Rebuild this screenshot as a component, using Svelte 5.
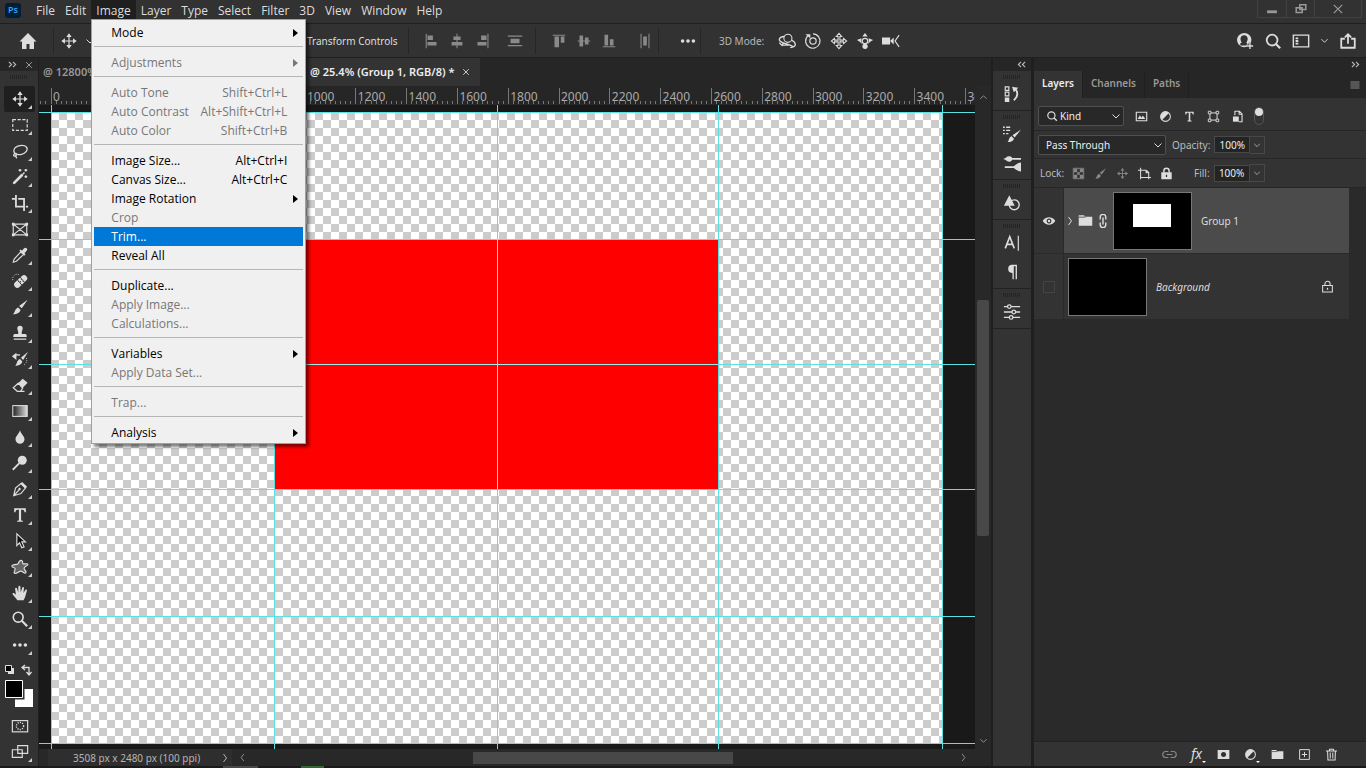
<script>
    const menus = ['File', 'Edit', 'Image', 'Layer', 'Type', 'Select', 'Filter', '3D', 'View', 'Window', 'Help']

    const imageMenu = [
        [{ label: 'Mode', sub: true }],
        [{ label: 'Adjustments', sub: true, off: true }],
        [
            { label: 'Auto Tone', keys: 'Shift+Ctrl+L', off: true },
            { label: 'Auto Contrast', keys: 'Alt+Shift+Ctrl+L', off: true },
            { label: 'Auto Color', keys: 'Shift+Ctrl+B', off: true }
        ],
        [
            { label: 'Image Size...', keys: 'Alt+Ctrl+I' },
            { label: 'Canvas Size...', keys: 'Alt+Ctrl+C' },
            { label: 'Image Rotation', sub: true },
            { label: 'Crop', off: true },
            { label: 'Trim...' },
            { label: 'Reveal All' }
        ],
        [
            { label: 'Duplicate...' },
            { label: 'Apply Image...', off: true },
            { label: 'Calculations...', off: true }
        ],
        [
            { label: 'Variables', sub: true },
            { label: 'Apply Data Set...', off: true }
        ],
        [{ label: 'Trap...', off: true }],
        [{ label: 'Analysis', sub: true }]
    ]

    const tools = ['move', 'marquee', 'lasso', 'wand', 'crop', 'frame', 'eyedropper', 'heal', 'brush', 'stamp', 'history-brush', 'eraser', 'gradient', 'blur', 'dodge', 'pen', 'type', 'arrow', 'shape', 'hand', 'zoom', 'more']

    const optionGroups = [
        ['align-left', 'align-center', 'align-right'],
        ['align-top', 'align-middle', 'align-bottom']
    ]
    const modes3d = ['orbit', 'roll', 'pan', 'slide', 'camera']
    const dock = [['history'], ['brushes', 'brush-settings'], ['shapes'], ['character', 'paragraph'], ['properties']]
    const filters = ['image', 'adjust', 'type', 'transform', 'smart']
    const locks = [['checker', true], ['brush', true], ['move', true], ['artboard', false], ['lock', false]]
    const layerActions = ['link-off', 'fx', 'mask', 'adjust', 'folder', 'new', 'trash']

    // document scale: 25.4% with rulers in pixels
    const zoom = 0.254
    const origin = 12
    const majors = Array.from({ length: 19 }, (_, i) => i * 200)
    const minors = Array.from({ length: 190 }, (_, i) => (i - 2) * 20)
    const guidesX = [0, 223, 446, 667, 891]
    const guidesY = [0, 127, 252, 377, 504, 631]

    let selected = $state('Trim...')
    let tool = $state('move')
    let opacity = $state('100%')
    let fill = $state('100%')

    const s = 'fill="none" stroke="currentColor"'
    const icons = {
        home: `<path fill="currentColor" d="M10 2 1.500 10.500H4V18h4.500v-5h3v5H16v-7.500h2.500z"/>`,
        move: `<path ${s} stroke-width="1.300" d="M10 3v14M3 10h14"/><path fill="currentColor" d="M10 1.500 13 5.500H7zM10 18.500 7 14.500h6zM1.500 10 5.500 7v6zM18.500 10 14.500 13V7z"/>`,
        marquee: `<rect ${s} stroke-width="1.300" stroke-dasharray="3.500 1.800" x="2" y="4" width="16" height="12"/>`,
        lasso: `<path ${s} stroke-width="1.400" d="M6 13.500C1 11 3 5 10 4c7-1 9.500 3 7 6.500-2.500 3.500-8 4-11 3-2.500-1-4 1-2.500 2s3-.5 2.500-2c-1 2-1 3 .5 4.500"/>`,
        wand: `<path stroke="currentColor" stroke-width="3" stroke-linecap="round" d="M3.500 16.500 12 8"/><path ${s} stroke-width="1.500" d="m13 7 2-2M10 1v3M8.500 2.500h3M16.500 1v3M15 2.500h3M16.500 8v3M15 9.500h3"/>`,
        crop: `<path ${s} stroke-width="2" d="M5.500 1v13H15M1 5.500h4M8 5.500h6.500V19M16.500 14H19"/>`,
        frame: `<path ${s} stroke-width="1.300" d="M2.500 4.500h15v12h-15zM2.500 4.500l15 12M17.500 4.500l-15 12"/><path fill="currentColor" d="M1 3h3v3H1zM16 3h3v3h-3zM1 15h3v3H1zM16 15h3v3h-3z"/>`,
        eyedropper: `<path ${s} stroke-width="1.300" d="m11 6.500 3 3-8 7.500-3.500 1 1-3.500z"/><path stroke="currentColor" stroke-width="4" stroke-linecap="round" d="m14 6 2-2"/><path stroke="currentColor" stroke-width="2" d="m10 4.500 5.500 5.500"/>`,
        heal: `<path stroke="currentColor" stroke-width="7" stroke-linecap="round" d="m7 14 7.500-7"/><path fill="#333" d="M8 10h1v1H8zM10 12h1v1h-1zM11 8h1v1h-1zM13 10h1v1h-1zM10 10h1v1h-1z"/><path fill="none" stroke="#333" d="m7 8.500 5 6M10 5.500l5 6"/><path ${s} stroke-dasharray="1 1.500" d="M2 9C1 5 5 1 9 3"/>`,
        brush: `<path fill="currentColor" d="m18.500 2-6.500 9.500-3-2.500zM8 10.500l2.500 2.500c0 3-3.500 5-8.500 5 2.500-1.500 2-6 6-7.500z"/>`,
        stamp: `<path fill="currentColor" d="M7 5a3 3 0 1 1 6 0c0 2-1.500 3-1 6h4c1 0 1.500 1 1.500 3.500h-15C2.500 12 3 11 4 11h4c.5-3-1-4-1-6zM3 16h14v1.500H3z"/>`,
        'history-brush': `<path fill="currentColor" d="m19 2-5.500 9L11 8.500zM10 10l2.500 2.500c0 3-3.500 5-8 5 2.500-1.500 1.500-6 5.500-7.500zM1 7l5-4v8z"/><path ${s} stroke-width="1.500" d="M5 5.500h5"/><path ${s} stroke-dasharray="1 1.500" d="M17 9c1.500 3 0 6-3 8"/>`,
        eraser: `<path fill="currentColor" d="m8 8 5-5 5.500 4.500-6 6z"/><path ${s} stroke-width="1.300" d="m8 8-5.500 5L7 17h3.500l2.500-3.500zM7 17h8"/>`,
        gradient: `<defs><linearGradient id="tool-gradient"><stop offset="0" stop-color="#222"/><stop offset="1" stop-color="#ddd"/></linearGradient></defs><rect x="2" y="4" width="16" height="12" fill="url(#tool-gradient)" stroke="currentColor" stroke-width="1.200"/>`,
        blur: `<path fill="currentColor" d="M10 2.500c1 4 5 6.500 5 10a5 5 0 0 1-10 0c0-3.500 4-6 5-10z"/>`,
        dodge: `<circle cx="12.500" cy="7" r="5" fill="currentColor"/><path stroke="currentColor" stroke-width="2" d="m9 10.500-7 7"/>`,
        pen: `<path ${s} stroke-width="1.300" d="M3 17.500 5 9l6-5 5 5-5 6zM3 17.500l6.500-7"/><circle cx="9.500" cy="10" r="1.300" fill="currentColor"/><path stroke="currentColor" stroke-width="2.500" d="m11.500 3 5.500 5.500"/>`,
        type: `<path fill="currentColor" d="M3.500 2.500h13v4.500H15c-.3-2-.8-2.800-2.300-2.800h-1.500V15c0 1 .5 1.300 2 1.400v1.100H6.800v-1.100c1.500-.1 2-.4 2-1.400V4.200H7.300C5.800 4.200 5.300 5 5 7H3.500z"/>`,
        arrow: `<path fill="#111" stroke="currentColor" stroke-width="1.300" d="M6.500 2v13l3-3 2.500 5.500 2.500-1-2.500-5.500h4z"/>`,
        shape: `<path fill="#666" stroke="currentColor" stroke-width="1.300" d="M7.500 7c1-2.500 2.500-5 4.500-4.300s0 3.300 1.500 3.800 4.800-1 5.300.5-4.300 2.500-4.300 4.500 3.500 3.500 2 5-3.500-2-5.500-2-5 3.500-7 2.500 1.500-4 .5-5.500-3.500-.5-3.500-2.500S6 7.300 7.500 7z"/>`,
        hand: `<path fill="currentColor" d="M7 18c-1-2-4-5-5.500-7 .5-1.500 2-1 4 1L4.500 5c.5-1.500 2-1 2.300.2L8 9.500 8.200 3c.3-1.500 2-1.500 2.200 0l.4 6.500L12.500 4c.5-1.300 2-.8 1.900.5L13.800 10l2.300-3.500c.8-1 2-.3 1.500 1C16.500 11 16 15 14 18z"/>`,
        zoom: `<circle ${s} stroke-width="1.800" cx="8" cy="8" r="5.500"/><path stroke="currentColor" stroke-width="2.400" d="m12 12 6 6"/>`,
        more: `<circle cx="4" cy="10" r="2" fill="currentColor"/><circle cx="10" cy="10" r="2" fill="currentColor"/><circle cx="16" cy="10" r="2" fill="currentColor"/>`,
        quickmask: `<rect ${s} stroke-width="1.300" x="1.500" y="4" width="17" height="12.500"/><circle ${s} stroke-width="1.500" stroke-dasharray="1.300 1.300" cx="10" cy="10" r="4"/>`,
        screen: `<path fill="#333" stroke="currentColor" stroke-width="1.300" d="M1.500 7.500h11V16h-11z"/><path ${s} stroke-width="1.300" d="M7.500 3h11v8.500h-11z"/>`,
        'align-left': `<path fill="currentColor" d="M3 2h1.200v16H3zM5 4h6v5H5zM5 11h10v4H5z"/>`,
        'align-center': `<path fill="currentColor" d="M9.400 2h1.200v16H9.400zM6 5h8v4H6zM4 11h12v4H4z"/>`,
        'align-right': `<path fill="currentColor" d="M16 2h1.200v16H16zM9 4h6v5H9zM5 11h10v4H5z"/>`,
        'dist-v': `<path fill="currentColor" d="M2 4h16v1.200H2zM5 7.500h10v5H5zM2 14.500h16v1.200H2z"/>`,
        'align-top': `<path fill="currentColor" d="M3 3h14v1.200H3zM5 5h5v12H5zM12 5h4v7h-4z"/>`,
        'align-middle': `<path fill="currentColor" d="M3 9.400h14v1.200H3zM5 4h4v12H5zM11 6h4v8h-4z"/>`,
        'align-bottom': `<path fill="currentColor" d="M3 15.800h14V17H3zM5 3h4v12H5zM11 8h4v7h-4z"/>`,
        'dist-h': `<path fill="currentColor" d="M5 2h1.200v16H5zM8 5h4v10H8zM13.800 2H15v16h-1.200z"/>`,
        orbit: `<circle ${s} stroke-width="1.200" cx="11" cy="7" r="4.500"/><path ${s} stroke-width="1.400" d="M7 5C1 5.500 0 9 3.500 11s10 3 13.500 5.500c3-.5 3.500-5-2-7.500M1.500 12l3 3 1.500-3M17 16.500l-3.500 1M5 14.500h7"/>`,
        roll: `<circle ${s} stroke-width="1.300" cx="10" cy="10" r="3.500"/><path ${s} stroke-width="1.300" d="M4.500 4a8 8 0 1 0 5.500-2"/><path fill="currentColor" d="M1.500 2.500h5.500v4.500z"/>`,
        pan: `<path ${s} stroke-width="1.200" d="M10 1.500 13 5h-2v4h4V7l3.500 3-3.500 3v-2h-4v4h2l-3 3.500L7 15h2v-4H5v2l-3.500-3L5 7v2h4V5H7z"/>`,
        slide: `<circle ${s} stroke-width="1.300" cx="10" cy="10" r="3"/><path fill="currentColor" d="m10 1 3 4H7zM1 9l5-2v5zM19 9l-5-2v5zM10 19a3 3 0 1 1 .1 0z"/><path ${s} d="m4 10 3 3M16 10l-3 3"/>`,
        camera: `<path fill="currentColor" d="M0 6h9v8H0zM9 10l4-4v8z"/><path ${s} stroke-width="1.300" d="M19 3.500 14.500 10l4.500 6.500"/>`,
        user: `<path fill="currentColor" fill-rule="evenodd" d="M9 1a8 8 0 1 0 3 15.500V14h2v-2h2.500A8 8 0 0 0 9 1zm0 2.500c2.500 0 4 1.800 4 4 0 1.800-.7 3-1.500 4l1 1.500-1.500 2H5l-.5-2 2-1.500C5.500 10.500 5 9.300 5 7.500c0-2.200 1.500-4 4-4z"/><path ${s} stroke-width="1.500" d="M15.500 12v7M12 15.500h7"/>`,
        search: `<circle ${s} stroke-width="2" cx="9" cy="9" r="6"/><path stroke="currentColor" stroke-width="2.400" d="m13 13 5 5"/>`,
        workspace: `<path ${s} stroke-width="1.600" d="M1.500 3.500h17v13h-17z"/><path fill="currentColor" d="M4 6h3v2H4zM4 9h3v2H4zM4 12h3v2H4z"/>`,
        share: `<path ${s} stroke-width="2" d="M6.500 7.500h-4v10h15v-10h-4M10 13V3M6.500 6 10 2.500 13.500 6"/>`,
        history: `<path ${s} stroke-width="1.300" d="M2.500 2h4v4h-4zM2.500 8h4v4h-4z"/><path fill="currentColor" d="M2 14h5v5H2zM10 2l7 1-5 5z"/><path ${s} stroke-width="2" d="M13 4c4 3 4 9-1 13"/>`,
        brushes: `<path fill="currentColor" d="M20 5 13 14l-2.500-2.500zM9.500 12.500 12 15c0 3-3.500 4-7 4 2-1.500 1-5 4.500-6.500z"/><path ${s} stroke-width="1.400" d="M0 2.500h2M3.500 2.500H8M0 6h2M3.500 6H8M0 9.500h2M3.500 9.500H6"/>`,
        'brush-settings': `<path ${s} stroke-width="2" d="M8 5.500h12M2 14.500h11"/><path fill="currentColor" d="M0 5.500C3 5 4 2 8 2.500l2 1.500v3L8 8.500C5 9 3 6 0 5.500zM20 9.500v10c-3 0-4.500-1.500-8-4v-2c3.500-2.500 5-4 8-4z"/>`,
        shapes: `<path fill="currentColor" d="M7 1.500 13 13H1z"/><circle ${s} stroke-width="1.500" cx="12.500" cy="12" r="5.500"/>`,
        character: `<path ${s} stroke-width="1.800" d="m2.500 16 5-13 5 13M4.500 11.500h6"/><path ${s} stroke-width="1.300" d="M17 2v16.500"/>`,
        paragraph: `<path fill="currentColor" d="M15.500 2v16H14V3.500h-2V18h-1.500v-7A4.500 4.500 0 0 1 10 2z"/>`,
        properties: `<path ${s} stroke-width="1.400" d="M1 4h4M9 4h10M1 10h9M14 10h5M1 16h6M11 16h8"/><circle ${s} stroke-width="1.400" cx="7" cy="4" r="2"/><circle ${s} stroke-width="1.400" cx="12" cy="10" r="2"/><circle ${s} stroke-width="1.400" cx="9" cy="16" r="2"/>`,
        image: `<path ${s} stroke-width="1.800" d="M2 3.500h16v13H2z"/><path fill="currentColor" d="m4 14 3.500-6 2.500 4 2-3.500L16 14z"/>`,
        adjust: `<circle ${s} stroke-width="1.600" cx="10" cy="10" r="7.500"/><path fill="currentColor" d="M15.300 4.700A7.500 7.500 0 0 0 4.700 15.300z"/>`,
        transform: `<path ${s} stroke-width="1.500" d="M4.500 4.500h11v11h-11z"/><path fill="#333" stroke="currentColor" stroke-width="1.400" d="M2 2h4v4H2zM14 2h4v4h-4zM2 14h4v4H2zM14 14h4v4h-4z"/>`,
        smart: `<path ${s} stroke-width="1.700" d="M6 8V2h7l4 4v12h-5M12.500 2v4.500H17"/><path fill="currentColor" d="M3 10h9v8H3z"/>`,
        checker: `<path ${s} stroke-width="1.500" d="M2 2h16v16H2z"/><path fill="currentColor" d="M3 3h5v5H3zM12 3h5v5h-5zM8 8h4v4H8zM3 12h5v5H3zM12 12h5v5h-5z"/>`,
        artboard: `<path ${s} stroke-width="1.600" d="M4 1v18M0 5h13M4 16h16M16.500 19V8.500L13 5M12.500 5v4h4"/>`,
        lock: `<path fill="currentColor" fill-rule="evenodd" d="M2 8h16v11H2zm7 4v3.500h2V12z"/><path ${s} stroke-width="2.200" d="M6 9V6a4 4 0 0 1 8 0v3"/>`,
        'lock-line': `<path ${s} stroke-width="1.600" d="M2.500 8.500h15v10h-15zM6 8.500V6a4 4 0 0 1 8 0v2.500"/><path fill="currentColor" d="M9 12h2v3H9z"/>`,
        eye: `<path fill="currentColor" fill-rule="evenodd" d="M1 10c4-7 14-7 18 0-4 7-14 7-18 0zm9-3.500a3.500 3.500 0 1 0 .1 0z"/><circle cx="10" cy="10" r="1.800" fill="currentColor"/>`,
        folder: `<path fill="currentColor" d="M1 3h7l1.500 2H19v12H1z"/><path stroke="#333" d="M1 5.500h9"/>`,
        chain: `<path ${s} stroke-width="2" d="M6 8V4.500a4 4 0 0 1 8 0V8M6 12v3.500a4 4 0 0 0 8 0V12M10 5v10"/>`,
        'link-off': `<path ${s} stroke-width="1.500" d="M8.500 6H5a4 4 0 0 0 0 8h3.500M11.500 6H15a4 4 0 0 1 0 8h-3.500M6 10h8"/>`,
        mask: `<path fill="currentColor" fill-rule="evenodd" d="M1 3h18v14H1zm9 3a4 4 0 1 0 .1 0z"/>`,
        new: `<path ${s} stroke-width="1.500" d="M2.500 2.500h15v15h-15zM10 6v8M6 10h8"/>`,
        trash: `<path ${s} stroke-width="1.600" d="M1.500 4.500h17M7 4V2h6v2M4 5l.5 13.500h11L16 5M8 7v9M12 7v9"/>`,
        down: `<path ${s} stroke-width="2" d="m3 7 7 7 7-7"/>`,
        up: `<path ${s} stroke-width="2" d="m3 13 7-7 7 7"/>`,
        right: `<path ${s} stroke-width="2" d="m7 2 6 8-6 8"/>`,
        left: `<path ${s} stroke-width="2" d="m13 2-6 8 6 8"/>`,
        expand: `<path ${s} stroke-width="2.500" d="m2 4 6 6-6 6M11 4l6 6-6 6"/>`,
        collapse: `<path ${s} stroke-width="2.500" d="m9 4-6 6 6 6M18 4l-6 6 6 6"/>`,
        close: `<path ${s} stroke-width="2" d="m3 3 14 14M17 3 3 17"/>`,
        menu: `<path ${s} stroke-width="1.500" d="M1 4h18M1 8h18M1 12h18M1 16h18"/>`,
        minimize: `<path ${s} stroke-width="4" d="M3 14h14"/>`,
        restore: `<path ${s} stroke-width="2.500" d="M8 3h10v8H8zM2 8h10v8H2z"/>`
    }
</script>

{#snippet icon(name, size = 20)}
    <svg class="icon" width={size} height={size} viewBox="0 0 20 20" aria-hidden="true">{@html icons[name]}</svg>
{/snippet}

<div class="app">
    <header class="menubar">
        <div class="logo">Ps</div>
        <nav>
            {#each menus as name}
                <div class="menu">
                    <button class:open={name === 'Image'}>{name}</button>
                    {#if name === 'Image'}
                        <div class="dropdown">
                            {#each imageMenu as group, g}
                                {#if g > 0}<hr />{/if}
                                {#each group as item}
                                    <button class="item" class:selected={selected === item.label} disabled={item.off} onclick={() => (selected = item.label)}>
                                        <span>{item.label}</span>
                                        {#if item.keys}<span class="keys">{item.keys}</span>{/if}
                                        {#if item.sub}<i class="caret"></i>{/if}
                                    </button>
                                {/each}
                            {/each}
                        </div>
                    {/if}
                </div>
            {/each}
        </nav>
        <div class="window-buttons">
            <button aria-label="Minimize">{@render icon('minimize', 14)}</button>
            <button aria-label="Restore">{@render icon('restore', 12)}</button>
            <button class="wide" aria-label="Close">{@render icon('close', 12)}</button>
        </div>
    </header>

    <div class="options">
        <button class="home" aria-label="Home">{@render icon('home')}</button>
        <button class="current" aria-label="Move tool">{@render icon('move', 18)}{@render icon('down', 10)}</button>
        <span class="transform">Transform Controls</span>
        <div class="group">
            {#each optionGroups[0] as name}<button class="dim" aria-label={name}>{@render icon(name, 18)}</button>{/each}
            <button class="dim wide" aria-label="Distribute vertically">{@render icon('dist-v', 18)}</button>
        </div>
        <div class="group">
            {#each optionGroups[1] as name}<button class="dim" aria-label={name}>{@render icon(name, 18)}</button>{/each}
            <button class="dim far" aria-label="Distribute horizontally">{@render icon('dist-h', 18)}</button>
        </div>
        <div class="group dots"><button aria-label="Align options">{@render icon('more', 18)}</button></div>
        <div class="group modes">
            <span>3D Mode:</span>
            {#each modes3d as name}<button aria-label={name}>{@render icon(name, 18)}</button>{/each}
        </div>
        <div class="right">
            <button aria-label="Account">{@render icon('user', 18)}</button>
            <button aria-label="Search">{@render icon('search', 18)}</button>
            <button aria-label="Workspace">{@render icon('workspace', 18)}</button>
            <button class="narrow" aria-label="Choose workspace">{@render icon('down', 9)}</button>
            <button aria-label="Share">{@render icon('share', 18)}</button>
        </div>
    </div>

    <div class="workspace">
        <aside class="tools">
            <div class="strip-head">{@render icon('expand', 9)}{@render icon('close', 8)}</div>
            <div class="grip"></div>
            {#each tools as name}
                <button class="tool" class:active={tool === name} class:single={name === 'frame'} aria-label={name} onclick={() => (tool = name)}>
                    {@render icon(name, 18)}
                </button>
            {/each}
            <svg class="swatches" width="30" height="46" viewBox="0 0 30 46">
                <path fill="#ddd" d="M4 6h6v6H4z" />
                <path fill="#000" stroke="#ddd" d="M1.500 3.500h6v6h-6z" />
                <path fill="none" stroke="#ddd" stroke-width="1.300" d="M19 5.500h6V12M21 3l-3 2.500L21 8M22.500 10l2.500 3 2.500-3" />
                <path fill="#fff" d="M11 27h18v18H11z" />
                <path fill="#000" stroke="#333" stroke-width="3" d="M1 18h18v18H1z" />
                <path fill="#000" stroke="#fff" d="M1.500 18.500h17v17h-17z" />
            </svg>
            <button class="tool single" aria-label="Quick mask">{@render icon('quickmask', 18)}</button>
            <button class="tool" aria-label="Screen mode">{@render icon('screen', 18)}</button>
        </aside>

        <main class="document">
            <div class="tabs">
                <button class="tab hidden-tab">@ 12800%</button>
                <button class="tab active">@ 25.4% (Group 1, RGB/8) * {@render icon('close', 8)}</button>
            </div>
            <div class="view">
                <div class="sheet">
                    <svg class="ruler" aria-hidden="true">
                        {#each minors as m}
                            <line x1={origin + m * zoom} x2={origin + m * zoom} y1="15" y2="18" />
                        {/each}
                        {#each majors as m}
                            <line x1={origin + m * zoom} x2={origin + m * zoom} y1="2" y2="18" />
                            <text x={origin + 2 + m * zoom} y="15">{m}</text>
                        {/each}
                    </svg>
                    <svg class="canvas" aria-label="Canvas">
                        <defs>
                            <pattern id="transparent" width="16" height="16" patternUnits="userSpaceOnUse">
                                <rect width="16" height="16" fill="#fff" />
                                <path fill="#ccc" d="M8 0h8v8H8zM0 8h8v8H0z" />
                            </pattern>
                        </defs>
                        <g transform="translate(12 7)">
                            <rect width="892" height="631" fill="url(#transparent)" />
                            <rect x="223" y="127" width="444" height="250" fill="#f00" />
                            {#each guidesX as x}<rect class="guide" {x} y="-7" width="1" height="100%" />{/each}
                            {#each guidesY as y}<rect class="guide" x="-12" {y} width="100%" height="1" />{/each}
                            <path fill="#fff" opacity="0.4" d="M446 127h1v250h-1zM223 252h444v1H223z" />
                        </g>
                    </svg>
                </div>
                <div class="scroll-y">{@render icon('up', 9)}<div class="thumb"></div>{@render icon('down', 9)}</div>
            </div>
            <div class="status">
                <div class="info"><span>3508 px x 2480 px (100 ppi)</span>{@render icon('right', 10)}</div>
                <div class="scroll-x">{@render icon('left', 9)}<div class="thumb"></div>{@render icon('right', 9)}</div>
            </div>
        </main>

        <aside class="dock">
            <div class="strip-head">{@render icon('collapse', 9)}</div>
            <div class="dock-body">
                {#each dock as group}
                    <div class="dock-group">
                        <div class="grip"></div>
                        {#each group as name}<button aria-label={name}>{@render icon(name, 18)}</button>{/each}
                    </div>
                {/each}
            </div>
        </aside>

        <aside class="panel">
            <div class="strip-head">{@render icon('expand', 9)}</div>
            <div class="panel-tabs">
                <button class="on">Layers</button>
                <button>Channels</button>
                <button>Paths</button>
                <span class="panel-menu">{@render icon('menu', 10)}</span>
            </div>
            <div class="panel-row filter-row">
                <label class="select kind">
                    {@render icon('search', 12)}
                    <select aria-label="Filter type"><option>Kind</option></select>
                    {@render icon('down', 10)}
                </label>
                <div class="filters">
                    {#each filters as name}<button aria-label={name}>{@render icon(name, 13)}</button>{/each}
                </div>
                <button class="toggle" aria-label="Toggle filtering"></button>
            </div>
            <div class="panel-row">
                <label class="select blend">
                    <select aria-label="Blend mode"><option>Pass Through</option></select>
                    {@render icon('down', 10)}
                </label>
                <label class="percent">Opacity: <input bind:value={opacity} /><span>{@render icon('down', 8)}</span></label>
            </div>
            <div class="panel-row lock-row">
                <span>Lock:</span>
                {#each locks as [name, off]}
                    <button class:dim={off} aria-label="Lock {name}">{@render icon(name, 13)}</button>
                {/each}
                <label class="percent">Fill: <input bind:value={fill} /><span>{@render icon('down', 8)}</span></label>
            </div>
            <div class="layers">
                <div class="layer current-layer">
                    <button class="eye" aria-label="Visibility">{@render icon('eye', 14)}</button>
                    <div class="layer-body">
                        {@render icon('right', 10)}
                        {@render icon('folder', 15)}
                        {@render icon('chain', 14)}
                        <div class="thumbnail"><div class="mask-white"></div></div>
                        <span>Group 1</span>
                    </div>
                </div>
                <div class="layer">
                    <button class="eye" aria-label="Visibility"><i class="empty"></i></button>
                    <div class="layer-body background">
                        <div class="thumbnail"></div>
                        <em>Background</em>
                        {@render icon('lock-line', 13)}
                    </div>
                </div>
            </div>
            <footer>
                {#each layerActions as name}
                    <button class:dim={name === 'link-off'} class:more={name === 'fx' || name === 'adjust'} aria-label={name}>
                        {#if name === 'fx'}<em>fx</em>{:else}{@render icon(name, name === 'link-off' ? 15 : 13)}{/if}
                    </button>
                {/each}
            </footer>
        </aside>
    </div>
    <div class="taskbar"><i></i><i class="green"></i></div>
</div>

<style>
    :global(body) {
        margin: 0;
        background: #1b1b1b;
    }

    .app {
        height: 100vh;
        display: flex;
        flex-direction: column;
        overflow: hidden;
        font-family: 'Noto Sans', 'Open Sans', sans-serif;
        font-size: 10px;
        line-height: 16px;
        color: #ddd;
    }

    button {
        display: flex;
        align-items: center;
        justify-content: center;
        padding: 0;
        border: 0;
        background: none;
        font: inherit;
        color: inherit;
    }

    .icon {
        display: block;
        flex: none;
    }

    .dim {
        color: #8a8a8a;
    }

    .menubar {
        display: flex;
        flex: none;
        height: 23px;
        background: #323232;
        border-bottom: 1px solid #1f1f1f;
        font-family: 'Open Sans', sans-serif;
        font-size: 12px;
    }

    .logo {
        width: 16px;
        height: 15px;
        margin: 3px 10px 0 5px;
        border-radius: 3px;
        background: #001e36;
        color: #31a8ff;
        font-size: 9px;
        font-weight: 600;
        line-height: 14px;
        text-align: center;
    }

    nav {
        display: flex;
    }

    .menu {
        position: relative;
    }

    .menu > button {
        height: 22px;
        padding: 0 5px;
        line-height: 22px;
    }

    .menu > .open {
        background: #1f1f1f;
    }

    .dropdown {
        position: absolute;
        z-index: 10;
        top: 19px;
        left: 0;
        width: 209px;
        padding: 3px 2px 1px;
        border: 1px solid #a0a0a0;
        background: #f0f0f0;
        box-shadow: 3px 3px 3px rgba(0, 0, 0, 0.5);
        color: #000;
    }

    .item {
        width: 100%;
        height: 19px;
        padding: 0 5px 0 17px;
        justify-content: flex-start;
        white-space: nowrap;
    }

    .item:disabled {
        color: #777;
    }

    .item.selected {
        background: #0078d7;
        color: #fff;
    }

    .keys {
        margin-left: auto;
        padding-right: 11px;
    }

    .caret {
        margin-left: auto;
        border: 4px solid transparent;
        border-left: 5px solid currentColor;
        border-right: 0;
    }

    hr {
        height: 1px;
        margin: 4px 0 6px;
        border: 0;
        background: #b5b5b5;
    }

    .window-buttons {
        display: flex;
        height: 17px;
        margin: 0 4px 0 auto;
        border: 1px solid #424242;
        border-top: 0;
        color: #999;
    }

    .window-buttons button {
        width: 28px;
    }

    .window-buttons button + button {
        border-left: 1px solid #424242;
    }

    .window-buttons .wide {
        width: 47px;
    }

    .options {
        display: flex;
        align-items: center;
        flex: none;
        height: 33px;
        background: #323232;
        border-bottom: 1px solid #1f1f1f;
    }

    .home {
        width: 54px;
        height: 26px;
        padding-left: 2px;
        border-right: 1px solid #262626;
        box-sizing: border-box;
    }

    .current {
        gap: 7px;
        margin-left: 6px;
    }

    .transform {
        width: 101px;
        margin-left: 212px;
        white-space: nowrap;
    }

    .group {
        display: flex;
        align-items: center;
        height: 26px;
        padding-left: 10px;
        border-left: 1px solid #262626;
    }

    .group button {
        width: 25px;
    }

    .group .wide {
        width: 41px;
    }

    .group .far {
        width: 33px;
        margin-right: 4px;
        justify-content: flex-end;
    }

    .options .dots {
        padding-left: 16px;
    }

    .options .modes {
        padding-left: 18px;
        color: #b8b8b8;
    }

    .modes span {
        width: 55px;
        white-space: nowrap;
    }

    .modes button {
        width: 26px;
        color: #ddd;
    }

    .right {
        display: flex;
        gap: 10px;
        margin-left: auto;
        padding-right: 9px;
    }

    .right .narrow {
        width: 9px;
    }

    .workspace {
        display: flex;
        flex: 1;
        min-height: 0;
        background: #1f1f1f;
    }

    .strip-head {
        display: flex;
        align-items: center;
        justify-content: space-between;
        flex: none;
        height: 13px;
        padding: 0 5px 0 8px;
        background: #262626;
        color: #bbb;
    }

    .grip {
        width: 18px;
        height: 4px;
        margin: 4px auto 0;
        background: repeating-linear-gradient(90deg, #242424 0 1px, transparent 1px 2px);
    }

    .tools {
        width: 38px;
        flex: none;
        margin-right: 1px;
        background: #333;
    }

    .tools .grip {
        margin: 4px auto 7px;
    }

    .tool {
        position: relative;
        width: 31px;
        height: 26px;
        margin-left: 4px;
    }

    .tool.active {
        background: #1f1f1f;
        border-radius: 2px;
    }

    .tool::after {
        content: '';
        position: absolute;
        right: 3px;
        bottom: 3px;
        border: 2px solid;
        border-color: transparent #ccc #ccc transparent;
    }

    .tool.single::after {
        display: none;
    }

    .swatches {
        display: block;
        margin: 4px 0 5px 4px;
    }

    .document {
        display: flex;
        flex-direction: column;
        flex: 1;
        min-width: 0;
    }

    .tabs {
        display: flex;
        flex: none;
        height: 28px;
        background: #262626;
        font-size: 11px;
        font-weight: 600;
    }

    .tab {
        padding: 0 10px;
        white-space: nowrap;
        color: #eee;
    }

    .tab.active {
        gap: 8px;
        background: #333;
    }

    .hidden-tab {
        width: 261px;
        padding: 0 4px;
        justify-content: flex-start;
        color: #999;
    }

    .view {
        display: flex;
        flex: 1;
        min-height: 0;
    }

    .sheet {
        display: flex;
        flex-direction: column;
        flex: 1;
        min-width: 0;
    }

    .ruler {
        display: block;
        width: 100%;
        height: 19px;
        flex: none;
        background: #262626;
    }

    .ruler line {
        stroke: #777;
        shape-rendering: crispEdges;
    }

    .ruler text {
        fill: #aaa;
        font-size: 12px;
    }

    .canvas {
        display: block;
        flex: 1;
        min-height: 0;
        width: 100%;
        background: #191919;
    }

    .guide {
        fill: #5ce0e2;
    }

    .scroll-y {
        display: flex;
        flex-direction: column;
        align-items: center;
        width: 16px;
        padding: 7px 0 4px;
        background: #282828;
        color: #999;
    }

    .scroll-y .thumb {
        width: 12px;
        height: 236px;
        margin: 198px 0 auto;
        border-radius: 2px;
        background: #484848;
    }

    .status {
        display: flex;
        flex: none;
        height: 17px;
        background: #282828;
        color: #b5b5b5;
    }

    .info {
        display: flex;
        align-items: center;
        justify-content: space-between;
        width: 157px;
        margin-left: 9px;
        padding: 0 2px 0 25px;
        background: #2e2e2e;
        white-space: nowrap;
    }

    .scroll-x {
        display: flex;
        align-items: center;
        flex: 1;
        padding: 0 23px 0 6px;
        color: #999;
    }

    .scroll-x .thumb {
        width: 260px;
        height: 12px;
        margin: 0 auto 0 226px;
        background: #484848;
    }

    .dock {
        display: flex;
        flex-direction: column;
        width: 38px;
        flex: none;
        margin: 0 3px 0 2px;
    }

    .dock .strip-head,
    .panel .strip-head {
        justify-content: flex-end;
    }

    .dock-body {
        flex: 1;
        background: #333;
    }

    .dock-group {
        padding-bottom: 2px;
        border-bottom: 1px solid #222;
    }

    .dock button {
        width: 100%;
        height: 29px;
    }

    .panel {
        display: flex;
        flex-direction: column;
        width: 332px;
        flex: none;
        background: #2a2a2a;
    }

    .panel .strip-head {
        padding-right: 6px;
    }

    .panel-tabs {
        display: flex;
        height: 27px;
        background: #262626;
        font-weight: 600;
        color: #999;
    }

    .panel-tabs button {
        padding: 0 8px 3px;
        border-right: 1px solid #1f1f1f;
    }

    .panel-tabs .on {
        background: #333;
        color: #eee;
    }

    .panel-menu {
        display: flex;
        align-items: center;
        margin: 0 6px 0 auto;
        color: #aaa;
    }

    .panel-row {
        display: flex;
        align-items: center;
        height: 27px;
        padding: 0 4px;
        background: #333;
        border-bottom: 1px solid #262626;
    }

    .filter-row {
        height: 33px;
        padding-top: 4px;
        box-sizing: border-box;
    }

    .select {
        display: flex;
        align-items: center;
        height: 18px;
        padding: 0 2px 0 7px;
        border: 1px solid #505050;
        border-radius: 2px;
        background: #282828;
    }

    .kind {
        width: 75px;
        gap: 2px;
    }

    .blend {
        width: 117px;
    }

    select,
    input {
        flex: 1;
        min-width: 0;
        padding: 0;
        border: 0;
        background: none;
        font: inherit;
        color: #eee;
        appearance: none;
    }

    .filters {
        display: flex;
        margin: 0 0 0 5px;
    }

    .filters button {
        width: 24px;
        height: 20px;
    }

    .toggle {
        align-items: flex-start;
        width: 10px;
        height: 18px;
        margin-left: 5px;
        border: 1px solid #555;
        border-radius: 5px;
        box-sizing: border-box;
    }

    .toggle::before {
        content: '';
        width: 8px;
        height: 8px;
        border-radius: 50%;
        background: #ddd;
    }

    .percent {
        display: flex;
        align-items: center;
        margin-left: 6px;
        color: #bbb;
    }

    .percent input {
        flex: none;
        width: 34px;
        height: 15px;
        margin-left: 4px;
        border: 1px solid #484848;
        background: #242424;
        text-align: center;
    }

    .percent span {
        padding: 4px 3px;
        border: 1px solid #484848;
        border-left: 0;
    }

    .lock-row {
        height: 28px;
        padding-left: 6px;
        color: #bbb;
    }

    .lock-row > span {
        width: 27px;
    }

    .lock-row button {
        width: 22px;
        height: 20px;
        color: #ddd;
    }

    .lock-row .dim {
        color: #888;
    }

    .lock-row .percent {
        margin-left: 17px;
    }

    .layers {
        flex: 1;
        padding-right: 17px;
    }

    .layer {
        display: flex;
        height: 65px;
        background: #333;
        border-bottom: 1px solid #2a2a2a;
    }

    .eye {
        width: 30px;
        border-right: 1px solid #2a2a2a;
    }

    .empty {
        width: 10px;
        height: 10px;
        border: 1px solid #444;
    }

    .layer-body {
        display: flex;
        align-items: center;
        flex: 1;
        gap: 3px;
        padding-left: 1px;
    }

    .current-layer .layer-body {
        background: #4b4b4b;
    }

    .layer-body span,
    .layer-body em {
        margin: 0 auto 0 6px;
    }

    .background {
        padding: 0 15px 0 4px;
    }

    .thumbnail {
        width: 77px;
        height: 56px;
        border: 1px solid #777;
        background: #000;
    }

    .mask-white {
        width: 38px;
        height: 23px;
        margin: 11px 0 0 19px;
        background: #fff;
    }

    footer {
        display: flex;
        justify-content: flex-end;
        height: 24px;
        padding-right: 21px;
        background: #333;
        border-top: 1px solid #222;
    }

    footer button {
        position: relative;
        width: 27px;
    }

    footer em {
        font-size: 14px;
    }

    footer .more::after {
        content: '';
        position: absolute;
        right: 4px;
        bottom: 3px;
        border: 2px solid transparent;
        border-top-color: #fff;
        border-bottom: 0;
    }

    .taskbar {
        display: flex;
        gap: 43px;
        flex: none;
        height: 2px;
        padding-left: 223px;
        background: #1a1a1a;
    }

    .taskbar i {
        width: 35px;
        background: #484848;
    }

    .taskbar .green {
        width: 23px;
        background: #2f6b2f;
    }
</style>
